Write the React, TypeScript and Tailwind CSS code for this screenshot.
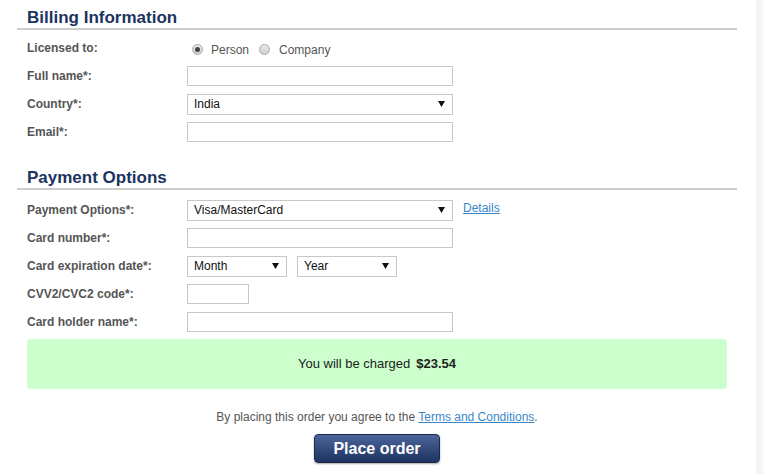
const font = { fontFamily: '"Liberation Sans", Arial, sans-serif' };

const Arrow = () => (
  <svg width="7" height="6" viewBox="0 0 7 6" className="shrink-0">
    <path d="M0 0 H7 L3.5 6 Z" fill="#111" />
  </svg>
);

const Select = ({ value, width }: { value: string; width: string }) => (
  <div
    className={`${width} h-[21px] flex items-center justify-between border border-[#c8c8c8] bg-white pl-[6px] pr-[7px] text-[12px] text-[#111]`}
  >
    <span>{value}</span>
    <Arrow />
  </div>
);

const Input = ({ width = "w-[266px]" }: { width?: string }) => (
  <div className={`${width} h-[20px] border border-[#c8c8c8] bg-white`} />
);

const Row = ({ label, children }: { label: string; children?: React.ReactNode }) => (
  <div className="h-[28px] flex items-center">
    <div className="w-[170px] pl-[10px] text-[12px] font-bold text-[#555]">{label}</div>
    <div className="flex items-center">{children}</div>
  </div>
);

const Heading = ({ title }: { title: string }) => (
  <div className="pt-[8px] border-b-2 border-[#cccccc]">
    <h2 className="pl-[10px] h-[20px] leading-[20px] text-[17px] font-bold text-[#1c3461]">{title}</h2>
  </div>
);

const Radio = ({ checked }: { checked?: boolean }) => (
  <span className="w-[11px] h-[11px] rounded-full border border-[#a9a9a9] bg-gradient-to-b from-[#e9e9e9] to-[#cfcfcf] flex items-center justify-center">
    {checked && <span className="w-[5px] h-[5px] rounded-full bg-[#444]" />}
  </span>
);

export default function App() {
  return (
    <div className="flex bg-white w-[763px] h-[474px] overflow-hidden" style={font}>
      <div className="w-[756px]">
        <div className="ml-[17px] w-[720px]">
          <Heading title="Billing Information" />
          <div className="pt-[4px]">
            <Row label="Licensed to:">
              <div className="flex items-center pl-[5px] text-[12px] text-[#555] pt-[3px]">
                <Radio checked />
                <span className="ml-[8px]">Person</span>
                <span className="ml-[10px]">
                  <Radio />
                </span>
                <span className="ml-[9px]">Company</span>
              </div>
            </Row>
            <Row label="Full name*:">
              <Input />
            </Row>
            <Row label="Country*:">
              <Select value="India" width="w-[266px]" />
            </Row>
            <Row label="Email*:">
              <Input />
            </Row>
          </div>

          <div className="mt-[14px]">
            <Heading title="Payment Options" />
          </div>
          <div className="pt-[6px]">
            <Row label="Payment Options*:">
              <Select value="Visa/MasterCard" width="w-[266px]" />
              <a href="#" className="ml-[10px] self-start -mt-[1px] text-[12px] text-[#3a87c8] underline">
                Details
              </a>
            </Row>
            <Row label="Card number*:">
              <Input />
            </Row>
            <Row label="Card expiration date*:">
              <div className="flex gap-[10px]">
                <Select value="Month" width="w-[100px]" />
                <Select value="Year" width="w-[100px]" />
              </div>
            </Row>
            <Row label="CVV2/CVC2 code*:">
              <Input width="w-[62px]" />
            </Row>
            <Row label="Card holder name*:">
              <Input />
            </Row>
          </div>

          <div className="mx-[10px] mt-[3px] h-[50px] rounded-[4px] bg-[#ccffcc] flex items-center justify-center text-[13px] text-[#222]">
            <span>You will be charged</span>
            <span className="ml-[6px] font-bold">$23.54</span>
          </div>

          <p className="mt-[19px] text-center text-[12px] text-[#555]">
            By placing this order you agree to the{" "}
            <a href="#" className="text-[#3a87c8] underline">
              Terms and Conditions
            </a>
            .
          </p>

          <div className="mt-[8px] flex justify-center">
            <button className="w-[126px] h-[29px] rounded-[4px] border border-[#1a2a4f] bg-gradient-to-b from-[#4c669c] to-[#1e335f] text-white text-[16px] font-bold shadow-[0_1px_2px_rgba(0,0,0,0.35)]">
              Place order
            </button>
          </div>
        </div>
      </div>
      <div className="w-[7px] h-[474px] bg-[#f5f5f5]" />
    </div>
  );
}
